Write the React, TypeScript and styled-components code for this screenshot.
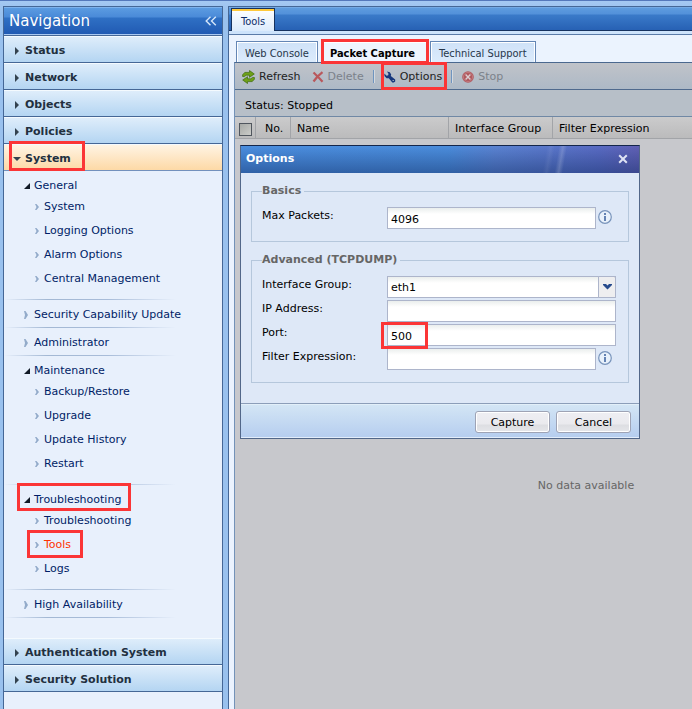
import React, { useState } from "react";
import styled, { createGlobalStyle, css } from "styled-components";

const GlobalStyle = createGlobalStyle`
  *, *::before, *::after { box-sizing: border-box; }
  html, body, #root { height: 100%; }
  body {
    margin: 0;
    background: #99c1ee;
    color: #000;
    font-family: "DejaVu Sans", Verdana, sans-serif;
    font-size: 11px;
    line-height: 16px;
  }
  button, input, select { font: inherit; color: inherit; }
`;

const ink = "#001d66";
const frame = "#456796";

const Page = styled.div`
  display: flex;
  gap: 5px;
  min-height: 100%;
  padding: 5px 0 0 3px;
  border-top: 1px solid #5478bb;
  background: linear-gradient(#a4c8f2, #99c1ee 12px);
`;

const Mark = styled.span<{ $top: number; $right: number; $bottom: number; $left: number }>`
  position: absolute;
  top: ${(p) => p.$top}px;
  right: ${(p) => p.$right}px;
  bottom: ${(p) => p.$bottom}px;
  left: ${(p) => p.$left}px;
  z-index: 2;
  border: 3px solid #fb3536;
  pointer-events: none;
`;

/* ---------- navigation ---------- */

const Sidebar = styled.nav`
  flex: 0 0 220px;
  border: 1px solid ${frame};
  border-bottom: 0;
  background: #e8f0fc;
`;

const NavHeader = styled.header`
  display: flex;
  align-items: center;
  justify-content: space-between;
  height: 29px;
  padding: 0 5px;
  border-bottom: 1px solid ${frame};
  box-shadow: inset 0 1px #7fb2ec, inset 0 -1px #a9c9f2;
  background: linear-gradient(#5d9de2 0, #4a8ad8 10px, #2f70c4 11px, #2059b2 28px);
  color: #fff;
`;

const NavTitle = styled.h1`
  margin: 0;
  font-size: 15px;
  font-weight: 400;
  line-height: 20px;
`;

const Bare = styled.button`
  display: flex;
  align-items: center;
  padding: 0;
  border: 0;
  background: none;
  cursor: pointer;
`;

const SectionButton = styled.button<{ $open?: boolean }>`
  position: relative;
  display: flex;
  align-items: center;
  gap: 4px;
  width: 100%;
  height: 27px;
  padding: 3px 0 0 9px;
  border: 0;
  border-bottom: 1px solid ${(p) => (p.$open ? "#7391bd" : frame)};
  box-shadow: inset 0 1px #f4fafe;
  background: ${(p) =>
    p.$open ? "linear-gradient(#fff5e6, #fdd9a6)" : "linear-gradient(#e0eefb, #b4d5f2)"};
  color: #22303f;
  font-weight: 700;
  text-align: left;
  cursor: pointer;
`;

const Tree = styled.div`
  padding-bottom: 20px;
`;

const Group = styled.section<{ $branch?: boolean }>`
  padding-bottom: ${(p) => (p.$branch ? 10 : 4)}px;
  background: linear-gradient(90deg, #e8f0fc, #a3b8d4 25%, #a8bcd9 60%, #e8f0fc) bottom left / 172px 1px
    no-repeat;
`;

const entry = css`
  position: relative;
  display: flex;
  align-items: center;
  width: max-content;
  color: ${ink};
  text-decoration: none;
`;

const GroupToggle = styled.button`
  ${entry}
  gap: 4px;
  height: 23px;
  padding: 7px 0 0 20px;
  border: 0;
  background: none;
  cursor: pointer;
`;

const GroupLink = styled.a`
  ${entry}
  gap: 6px;
  height: 24px;
  padding: 5px 0 0 20px;
`;

const List = styled.ul`
  margin: 0;
  padding: 0;
  list-style: none;
`;

const ItemLink = styled.a<{ $current?: boolean }>`
  ${entry}
  gap: 5px;
  height: 24px;
  padding: 2px 0 0 31px;
  ${(p) => p.$current && css`color: #ff3300;`}
`;

const Chevron = ({ large }: { large?: boolean }) =>
  large ? (
    <svg width="4" height="8" viewBox="0 0 4 8" aria-hidden="true">
      <path d="M0 0H1.5L4 4L1.5 8H0L1 4Z" fill="#93abca" />
    </svg>
  ) : (
    <svg width="4" height="6" viewBox="0 0 4 6" aria-hidden="true">
      <path d="M0 0H1.5L4 3L1.5 6H0L1.5 3Z" fill="#93abca" />
    </svg>
  );

const Corner = () => (
  <svg width="6" height="6" viewBox="0 0 6 6" aria-hidden="true">
    <path d="M6 0V6H0Z" fill="#111a26" />
  </svg>
);

const SectionArrow = ({ open }: { open?: boolean }) => (
  <svg width="8" height="8" viewBox="0 0 8 8" aria-hidden="true">
    <path d={open ? "M0 2H8L4 6Z" : "M2 0L6 4L2 8Z"} fill="#33424f" />
  </svg>
);

/* ---------- main panel ---------- */

const Main = styled.main`
  display: flex;
  flex: 1;
  flex-direction: column;
  min-width: 0;
  overflow: hidden;
  border: 1px solid ${frame};
  border-width: 1px 0 0 1px;
  background: #ebf3fe;
`;

const WindowTabs = styled.div`
  display: flex;
  flex: none;
  align-items: flex-end;
  height: 24px;
  padding-left: 2px;
  border-bottom: 1px solid #16325f;
  box-shadow: inset 0 1px #74a9e4;
  background: linear-gradient(#5f9ddf 0, #5391da 7px, #3a7ac9 8px, #2761b4 23px);
`;

const WindowTab = styled.button`
  height: 23px;
  margin-bottom: -1px;
  padding: 3px 9px 0;
  border: 1px solid #16325f;
  border-bottom: 0;
  box-shadow: inset 0 2px #ffc93c;
  background: linear-gradient(#fff, #dcebfc);
  color: #0c2c69;
  font-family: "DejaVu Sans Condensed", Tahoma, sans-serif;
`;

const TabGap = styled.div`
  flex: none;
  height: 4px;
  border-bottom: 1px solid #5a7ba8;
  background: #cde3fb;
`;

const ViewTabs = styled.div`
  display: flex;
  flex: none;
  align-items: flex-end;
  height: 27px;
  padding-left: 7px;
`;

const ViewTab = styled.button<{ $active?: boolean }>`
  position: relative;
  height: 21px;
  padding: 4px 8px 0;
  border: 1px solid #6486b5;
  border-bottom: 0;
  box-shadow: inset 1px 1px #fff, inset -1px 0 #fff;
  background: linear-gradient(#cfe2f8, #dcebfc);
  color: #26364a;
  font-family: "DejaVu Sans Condensed", Tahoma, sans-serif;
  white-space: nowrap;
  cursor: pointer;
  ${(p) =>
    p.$active &&
    css`
      margin: 0 2px 0 3px;
      padding-right: 12px;
      background: #eef5fe;
      color: #000;
      font-weight: 700;
    `}
`;

const Pane = styled.div`
  position: relative;
  flex: 1;
  margin-left: 5px;
  border-left: 1px solid #7392b8;
  border-top: 1px solid #4a688f;
  background: #c7c8cc;
`;

const Toolbar = styled.div`
  display: flex;
  align-items: center;
  gap: 7px;
  height: 27px;
  padding-left: 5px;
  border-bottom: 1px solid #4f6a8d;
  background: linear-gradient(#c0c3c9, #adb9c6);
`;

const Tool = styled.button`
  position: relative;
  display: flex;
  flex: none;
  align-items: center;
  gap: 4px;
  height: 26px;
  padding: 2px 2px 0;
  border: 0;
  background: none;
  color: #222;
  white-space: nowrap;
  cursor: pointer;
  &:disabled { color: #7c828a; cursor: default; }
`;

const Divider = styled.span`
  width: 2px;
  height: 13px;
  border-left: 1px solid #6f94bf;
  border-right: 1px solid #d5d9de;
`;

const StatusLine = styled.div`
  height: 27px;
  padding: 8px 10px 0;
  border-bottom: 1px solid #7088a5;
  background: #b7bfc8;
`;

const GridArea = styled.div`
  overflow: hidden;
`;

const Grid = styled.table`
  width: 100%;
  min-width: 702px;
  border-collapse: separate;
  border-spacing: 0;
  table-layout: fixed;
`;

const HeadCell = styled.th<{ $width?: number }>`
  width: ${(p) => (p.$width ? `${p.$width}px` : "auto")};
  height: 22px;
  padding: 3px 0 0 6px;
  border-right: 1px solid #a2a4a8;
  border-bottom: 1px solid #a2a4a8;
  background: linear-gradient(#cbcbcc, #bbbbbc);
  font-weight: 400;
  line-height: 16px;
  text-align: left;
  white-space: nowrap;
`;

const NumberCell = styled(HeadCell)`
  padding-left: 9px;
`;

const CheckCell = styled(HeadCell)`
  padding-left: 4px;
`;

const Check = styled.input`
  appearance: none;
  display: block;
  width: 13px;
  height: 13px;
  margin: 0;
  border: 1px solid #50565e;
  background: linear-gradient(135deg, #a7a9a6, #cbccc9);
`;

const Empty = styled.td`
  padding: 339px 0 0;
  color: #666;
  line-height: 16px;
  text-align: center;
`;

/* ---------- dialog ---------- */

const Dialog = styled.section`
  position: absolute;
  top: 82px;
  left: 5px;
  z-index: 1;
  width: 400px;
  border: 1px solid #526789;
  border-top-color: #14264b;
  background: #dee8f7;
`;

const DialogHeader = styled.header`
  display: flex;
  align-items: center;
  justify-content: space-between;
  height: 27px;
  padding: 0 11px 1px 5px;
  background:
    linear-gradient(100deg, transparent 76%, #ffffff10 77%, transparent 78%, transparent 79%, #ffffff2c 80%, transparent 81%),
    linear-gradient(transparent, #0d285f70),
    linear-gradient(90deg, #4b8edf, #4b8ddc 52%, #5b83d2 64%, #596bc3 90%, #6060b4);
  color: #fff;
`;

const DialogTitle = styled.h2`
  margin: 0;
  font-size: 11px;
  font-weight: 700;
`;

const DialogBody = styled.form`
  display: flex;
  flex-direction: column;
  gap: 11px;
  padding: 11px 10px 20px;
`;

const Fieldset = styled.fieldset`
  min-width: 0;
  margin: 0;
  padding: 9px 12px 10px 10px;
  border: 1px solid #b5c7dc;
`;

const Legend = styled.legend`
  padding: 0 3px 0 0;
  color: #666;
  font-weight: 700;
  line-height: 14px;
`;

const Row = styled.div`
  display: grid;
  grid-template-columns: 125px 1fr;
  height: 24px;
`;

const Label = styled.label`
  padding-top: 1px;
`;

const Control = styled.div`
  position: relative;
  display: flex;
  align-items: flex-start;
  gap: 2px;
`;

const fieldBox = css`
  height: 22px;
  border: 1px solid #adb5cb;
  border-radius: 0;
  outline: 0;
  background: linear-gradient(#eaeeed, #fff 6px);
`;

const TextField = styled.input`
  ${fieldBox}
  flex: 1;
  min-width: 0;
  padding: 2px 3px 0;
`;

const Dropdown = styled.select`
  ${fieldBox}
  appearance: none;
  flex: 1;
  min-width: 0;
  padding: 2px 20px 0 3px;
`;

const DropdownArrow = styled.span`
  position: absolute;
  top: 0;
  right: 0;
  display: flex;
  align-items: center;
  justify-content: center;
  width: 18px;
  height: 22px;
  border: 1px solid #adb5cb;
  border-radius: 0 2px 0 0;
  background: #eeeef0;
  pointer-events: none;
`;

const InfoButton = styled(Bare)`
  width: 18px;
  height: 20px;
`;

const DialogFooter = styled.footer`
  display: flex;
  justify-content: flex-end;
  gap: 6px;
  height: 35px;
  padding: 7px 8px 0;
  border-top: 1px solid #8c9eb9;
  box-shadow: inset 0 1px #e2eff9, inset 0 -1px #e2edfb;
  background: linear-gradient(#d4e6f5, #b5cdef);
`;

const PushButton = styled.button`
  width: 75px;
  height: 22px;
  padding: 2px 0 0;
  border: 1px solid #9ea3b5;
  border-radius: 3px;
  box-shadow: inset 0 0 0 1px #fff;
  background: linear-gradient(#eeeef3 0, #eaeaee 12px, #dddee2 13px, #e6e7eb 21px);
  cursor: pointer;
`;

const InfoIcon = () => (
  <svg width="14" height="14" viewBox="0 0 14 14" aria-hidden="true">
    <circle cx="7" cy="7" r="6.3" fill="#e8f1fb" stroke="#7894bb" strokeWidth="1.2" />
    <path d="M6 3h2v2H6zM6 6h2v5H6z" fill="#6483b4" />
  </svg>
);

const RefreshIcon = () => (
  <svg width="13" height="14" viewBox="0 0 13 14" aria-hidden="true">
    <g fill="#6ea018" stroke="#3c6a0c" strokeWidth=".7" strokeLinejoin="round">
      <path d="M.6 6.5V4.8L2.8 2.4H7.5V.5L12.3 4L7.5 7.3V5.2H4.2L2.4 6.6Z" />
      <path d="M12.4 7.5V9.2L10.2 11.6H5.5V13.5L.7 10L5.5 6.7V8.8H8.8L10.6 7.4Z" />
    </g>
  </svg>
);

const DeleteIcon = () => (
  <svg width="12" height="12" viewBox="0 0 12 12" aria-hidden="true">
    <path d="M1.5 1.5C4 4 7 6.5 10.5 10.8M10.5 1.2C7.5 3.5 4 7 1.5 10.5" stroke="#b9585c" strokeWidth="2.2" fill="none" />
  </svg>
);

const WrenchIcon = () => (
  <svg width="12" height="12" viewBox="0 0 12 12" aria-hidden="true">
    <path d="M3 .6L5.8 1.2L7.2 3.5L6.8 5L11.2 8.6V10.5L9.8 11.4H8.3L4.8 7.2L2.6 7.2L.5 5L.3 2.5L2.6 4.7L4.2 4.3L4.5 2.7Z" fill="#17377c" />
    <path d="M8.6 9h1.2v1.1H8.6z" fill="#b7bfc8" />
  </svg>
);

const StopIcon = () => (
  <svg width="12" height="12" viewBox="0 0 12 12" aria-hidden="true">
    <circle cx="6" cy="6" r="5.8" fill="#b05a60" />
    <circle cx="6" cy="6" r="4.6" fill="none" stroke="#c98387" strokeWidth=".7" />
    <path d="M3.6 3.6L8.4 8.4M8.4 3.6L3.6 8.4" stroke="#dccdd0" strokeWidth="1.4" />
  </svg>
);

type Entry = { name: string; children?: string[] };

const tree: Entry[] = [
  { name: "General", children: ["System", "Logging Options", "Alarm Options", "Central Management"] },
  { name: "Security Capability Update" },
  { name: "Administrator" },
  { name: "Maintenance", children: ["Backup/Restore", "Upgrade", "Update History", "Restart"] },
  { name: "Troubleshooting", children: ["Troubleshooting", "Tools", "Logs"] },
  { name: "High Availability" },
];

const Section = ({ name, open }: { name: string; open?: boolean }) => (
  <SectionButton type="button" $open={open} aria-expanded={!!open}>
    <SectionArrow open={open} />
    {name}
    {open && <Mark $top={-3} $right={137} $bottom={-1} $left={5} />}
  </SectionButton>
);

const Navigation = () => (
  <Sidebar aria-label="Navigation">
    <NavHeader>
      <NavTitle>Navigation</NavTitle>
      <Bare type="button" aria-label="Collapse navigation">
        <svg width="12" height="10" viewBox="0 0 12 10" aria-hidden="true">
          <path d="M5.5 .7L1.2 5L5.5 9.3M10.8 .7L6.5 5L10.8 9.3" fill="none" stroke="#d5e6fa" strokeWidth="1.4" />
        </svg>
      </Bare>
    </NavHeader>
    {["Status", "Network", "Objects", "Policies"].map((name) => (
      <Section key={name} name={name} />
    ))}
    <Section name="System" open />
    <Tree>
      {tree.map(({ name, children }) => (
        <Group key={name} $branch={!!children}>
          {children ? (
            <>
              <GroupToggle type="button" aria-expanded>
                <Corner />
                {name}
                {name === "Troubleshooting" && <Mark $top={-2} $right={-10} $bottom={-3} $left={13} />}
              </GroupToggle>
              <List>
                {children.map((child) => (
                  <li key={child}>
                    <ItemLink href="#" $current={child === "Tools"}>
                      <Chevron />
                      {child}
                      {child === "Tools" && <Mark $top={-2} $right={-12} $bottom={-2} $left={23} />}
                    </ItemLink>
                  </li>
                ))}
              </List>
            </>
          ) : (
            <GroupLink href="#">
              <Chevron large />
              {name}
            </GroupLink>
          )}
        </Group>
      ))}
    </Tree>
    <Section name="Authentication System" />
    <Section name="Security Solution" />
  </Sidebar>
);

const OptionsDialog = () => {
  const [maxPackets, setMaxPackets] = useState("4096");
  const [port, setPort] = useState("500");
  return (
    <Dialog role="dialog" aria-labelledby="options-title">
      <DialogHeader>
        <DialogTitle id="options-title">Options</DialogTitle>
        <Bare type="button" aria-label="Close">
          <svg width="10" height="10" viewBox="0 0 10 10" aria-hidden="true">
            <path d="M1.2 1.2L8.8 8.8M8.8 1.2L1.2 8.8" stroke="#dfe3f4" strokeWidth="2" />
          </svg>
        </Bare>
      </DialogHeader>
      <DialogBody>
        <Fieldset>
          <Legend>Basics</Legend>
          <Row>
            <Label htmlFor="max-packets">Max Packets:</Label>
            <Control>
              <TextField id="max-packets" value={maxPackets} onChange={(e) => setMaxPackets(e.target.value)} />
              <InfoButton type="button" aria-label="About max packets">
                <InfoIcon />
              </InfoButton>
            </Control>
          </Row>
        </Fieldset>
        <Fieldset>
          <Legend>Advanced (TCPDUMP)</Legend>
          <Row>
            <Label htmlFor="interface-group">Interface Group:</Label>
            <Control>
              <Dropdown id="interface-group" defaultValue="eth1">
                <option>eth1</option>
              </Dropdown>
              <DropdownArrow>
                <svg width="9" height="6" viewBox="0 0 9 6" aria-hidden="true">
                  <path d="M0 0H3L4.5 1.5L6 0H9V1L4.5 5.5L0 1Z" fill="#274b8d" />
                </svg>
              </DropdownArrow>
            </Control>
          </Row>
          <Row>
            <Label htmlFor="ip-address">IP Address:</Label>
            <Control>
              <TextField id="ip-address" />
            </Control>
          </Row>
          <Row>
            <Label htmlFor="port">Port:</Label>
            <Control>
              <TextField id="port" value={port} onChange={(e) => setPort(e.target.value)} />
              <Mark $top={-2} $right={188} $bottom={-1} $left={-6} />
            </Control>
          </Row>
          <Row>
            <Label htmlFor="filter-expression">Filter Expression:</Label>
            <Control>
              <TextField id="filter-expression" />
              <InfoButton type="button" aria-label="About filter expression">
                <InfoIcon />
              </InfoButton>
            </Control>
          </Row>
        </Fieldset>
      </DialogBody>
      <DialogFooter>
        <PushButton type="button">Capture</PushButton>
        <PushButton type="button">Cancel</PushButton>
      </DialogFooter>
    </Dialog>
  );
};

export default function App() {
  return (
    <Page>
      <GlobalStyle />
      <Navigation />
      <Main>
        <WindowTabs>
          <WindowTab type="button">Tools</WindowTab>
        </WindowTabs>
        <TabGap />
        <ViewTabs>
          <ViewTab type="button">Web Console</ViewTab>
          <ViewTab type="button" $active>
            Packet Capture
            <Mark $top={-3} $right={-2} $bottom={-2} $left={-1} />
          </ViewTab>
          <ViewTab type="button">Technical Support</ViewTab>
        </ViewTabs>
        <Pane>
          <Toolbar>
            <Tool type="button">
              <RefreshIcon />
              Refresh
            </Tool>
            <Tool type="button" disabled>
              <DeleteIcon />
              Delete
            </Tool>
            <Divider />
            <Tool type="button">
              <WrenchIcon />
              Options
              <Mark $top={-1} $right={-3} $bottom={-1} $left={-1} />
            </Tool>
            <Divider />
            <Tool type="button" disabled>
              <StopIcon />
              Stop
            </Tool>
          </Toolbar>
          <StatusLine>Status: Stopped</StatusLine>
          <GridArea>
            <Grid>
              <thead>
                <tr>
                  <CheckCell $width={21}>
                    <Check type="checkbox" aria-label="Select all" />
                  </CheckCell>
                  <NumberCell $width={35}>No.</NumberCell>
                  <HeadCell $width={158}>Name</HeadCell>
                  <HeadCell $width={104}>Interface Group</HeadCell>
                  <HeadCell>Filter Expression</HeadCell>
                </tr>
              </thead>
              <tbody>
                <tr>
                  <Empty colSpan={5}>No data available</Empty>
                </tr>
              </tbody>
            </Grid>
          </GridArea>
          <OptionsDialog />
        </Pane>
      </Main>
    </Page>
  );
}
